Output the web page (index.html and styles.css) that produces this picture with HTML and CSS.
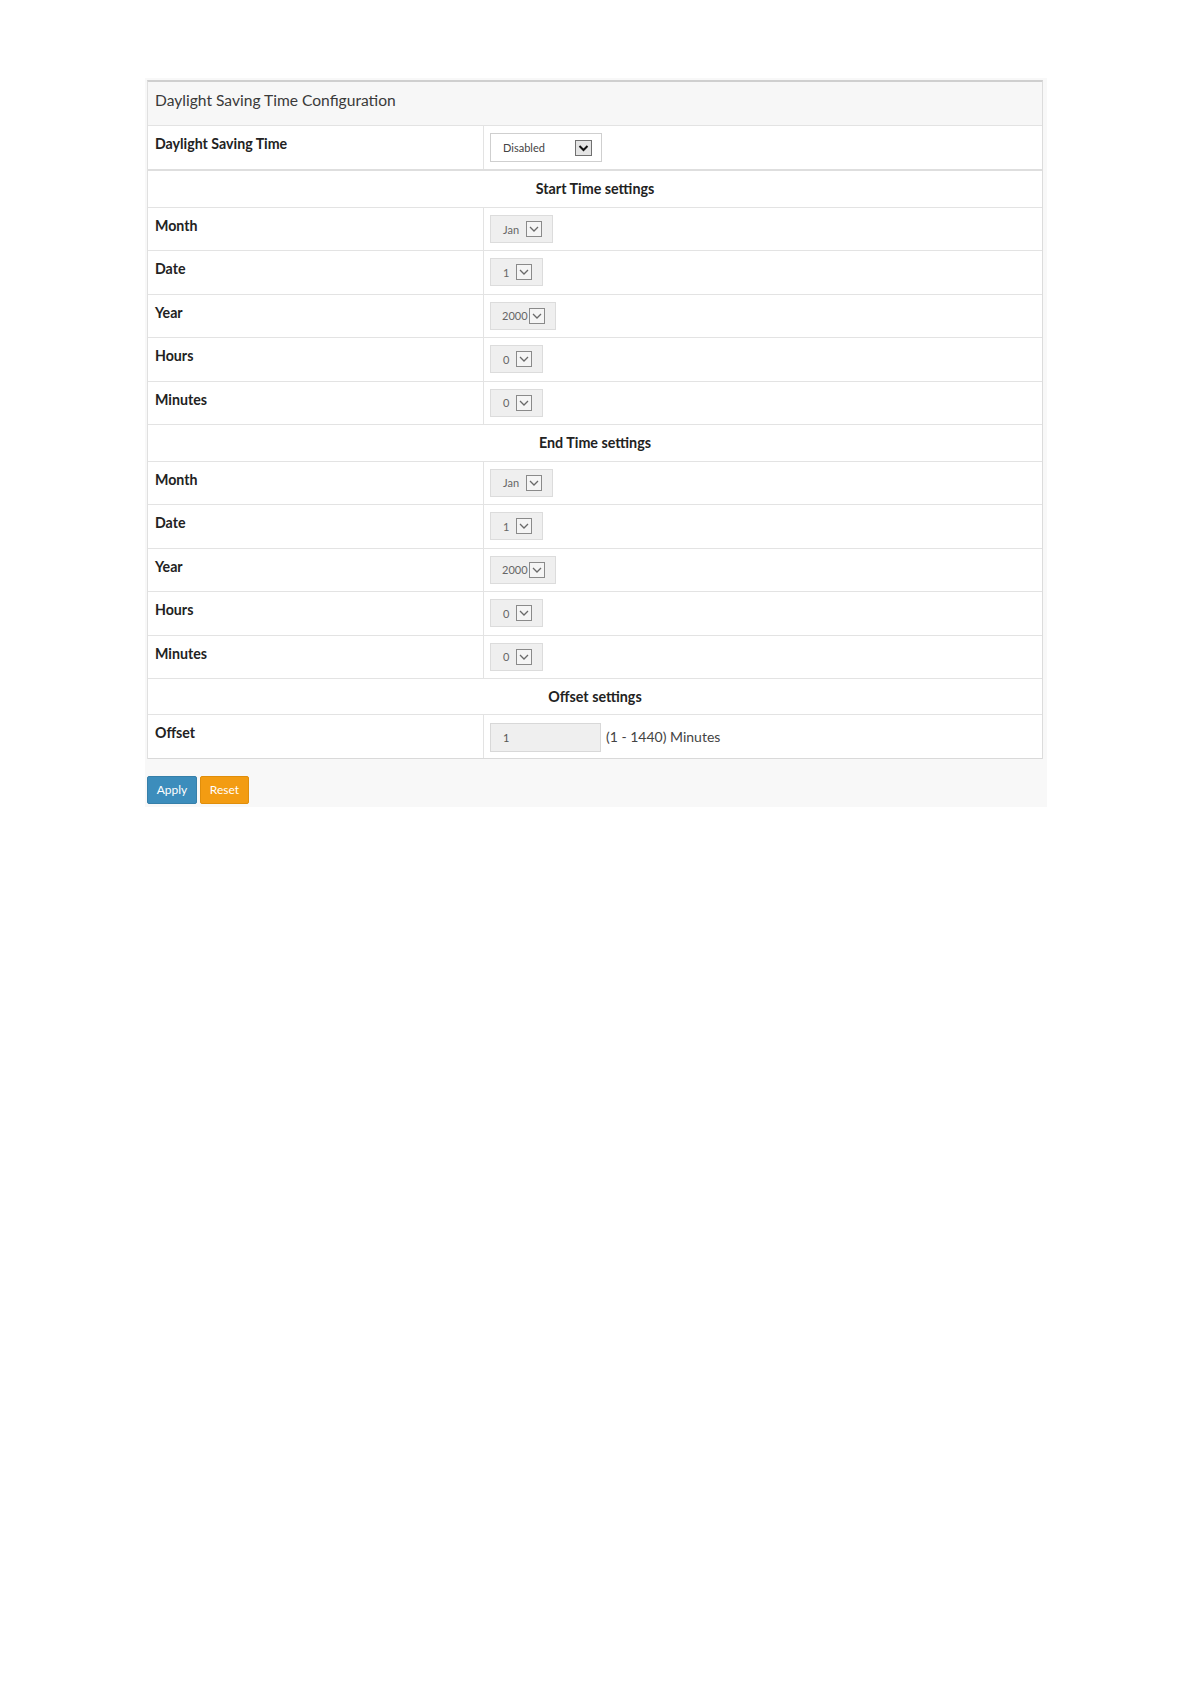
FILE: index.html
```html
<!DOCTYPE html>
<html>
<head>
<meta charset="utf-8">
<link rel="stylesheet" href="styles.css">
</head>
<body>
<div class="panel">
  <div class="box">
    <div class="box-title">Daylight Saving Time Configuration</div>
    <div class="row row-dst">
      <div class="cell label">Daylight Saving Time</div>
      <div class="cell value">
        <div class="sel sel-active w-dst"><span>Disabled</span><svg class="arr" viewBox="0 0 17 16"><rect x="0.5" y="0.5" width="16" height="15" /><path d="M4.5 6 L8.5 10 L12.5 6" /></svg></div>
      </div>
    </div>
    <div class="row section">Start Time settings</div>
    <div class="row data">
      <div class="cell label">Month</div>
      <div class="cell value"><div class="sel w-month"><span>Jan</span><svg class="arr" viewBox="0 0 16 16"><rect x="0.5" y="0.5" width="15" height="15" /><path d="M4 6 L8 10 L12 6" /></svg></div></div>
    </div>
    <div class="row data">
      <div class="cell label">Date</div>
      <div class="cell value"><div class="sel w-small"><span>1</span><svg class="arr" viewBox="0 0 16 16"><rect x="0.5" y="0.5" width="15" height="15" /><path d="M4 6 L8 10 L12 6" /></svg></div></div>
    </div>
    <div class="row data">
      <div class="cell label">Year</div>
      <div class="cell value"><div class="sel w-year"><span>2000</span><svg class="arr" viewBox="0 0 16 16"><rect x="0.5" y="0.5" width="15" height="15" /><path d="M4 6 L8 10 L12 6" /></svg></div></div>
    </div>
    <div class="row data">
      <div class="cell label">Hours</div>
      <div class="cell value"><div class="sel w-small"><span>0</span><svg class="arr" viewBox="0 0 16 16"><rect x="0.5" y="0.5" width="15" height="15" /><path d="M4 6 L8 10 L12 6" /></svg></div></div>
    </div>
    <div class="row data">
      <div class="cell label">Minutes</div>
      <div class="cell value"><div class="sel w-small"><span>0</span><svg class="arr" viewBox="0 0 16 16"><rect x="0.5" y="0.5" width="15" height="15" /><path d="M4 6 L8 10 L12 6" /></svg></div></div>
    </div>
    <div class="row section section-b">End Time settings</div>
    <div class="row data">
      <div class="cell label">Month</div>
      <div class="cell value"><div class="sel w-month"><span>Jan</span><svg class="arr" viewBox="0 0 16 16"><rect x="0.5" y="0.5" width="15" height="15" /><path d="M4 6 L8 10 L12 6" /></svg></div></div>
    </div>
    <div class="row data">
      <div class="cell label">Date</div>
      <div class="cell value"><div class="sel w-small"><span>1</span><svg class="arr" viewBox="0 0 16 16"><rect x="0.5" y="0.5" width="15" height="15" /><path d="M4 6 L8 10 L12 6" /></svg></div></div>
    </div>
    <div class="row data">
      <div class="cell label">Year</div>
      <div class="cell value"><div class="sel w-year"><span>2000</span><svg class="arr" viewBox="0 0 16 16"><rect x="0.5" y="0.5" width="15" height="15" /><path d="M4 6 L8 10 L12 6" /></svg></div></div>
    </div>
    <div class="row data">
      <div class="cell label">Hours</div>
      <div class="cell value"><div class="sel w-small"><span>0</span><svg class="arr" viewBox="0 0 16 16"><rect x="0.5" y="0.5" width="15" height="15" /><path d="M4 6 L8 10 L12 6" /></svg></div></div>
    </div>
    <div class="row data">
      <div class="cell label">Minutes</div>
      <div class="cell value"><div class="sel w-small"><span>0</span><svg class="arr" viewBox="0 0 16 16"><rect x="0.5" y="0.5" width="15" height="15" /><path d="M4 6 L8 10 L12 6" /></svg></div></div>
    </div>
    <div class="row section section-c">Offset settings</div>
    <div class="row data row-last">
      <div class="cell label">Offset</div>
      <div class="cell value"><div class="inp">1</div><span class="unit">(1 - 1440) Minutes</span></div>
    </div>
  </div>
  <div class="buttons">
    <button class="btn btn-apply">Apply</button>
    <button class="btn btn-reset">Reset</button>
  </div>
</div>
</body>
</html>
```

FILE: styles.css
```css
html, body {
  margin: 0;
  padding: 0;
  background: #ffffff;
}

body {
  font-family: "Lato", "Open Sans", sans-serif;
  color: #333333;
}

.panel {
  margin: 78px 0 0 145px;
  width: 902px;
  background: #f8f8f8;
  padding: 2px 0 3px 2px;
  box-sizing: border-box;
}

.box {
  width: 896px;
  border-top: 2px solid #cfcfcf;
  border-left: 1px solid #e0e0e0;
  border-right: 1px solid #dcdcdc;
  box-sizing: border-box;
  background: #ffffff;
}

.box-title {
  height: 44px;
  box-sizing: border-box;
  padding: 8px 0 0 7px;
  font-size: 15.6px;
  line-height: 20px;
  color: #3a3a3a;
  background: #f7f7f7;
  border-bottom: 1px solid #e3e3e3;
}

.row {
  display: grid;
  grid-template-columns: 336px 1fr;
  box-sizing: border-box;
  border-bottom: 1px solid #e3e3e3;
}

.row-dst {
  height: 45px;
  border-bottom: 2px solid #dedede;
}

.data {
  height: 43.4px;
}

.row-last {
  height: 44px;
  border-bottom: 1px solid #d9d9d9;
}

.section {
  display: block;
  height: 37px;
  padding-top: 9px;
  text-align: center;
  font-weight: bold;
  font-size: 14.3px;
  line-height: 18px;
  color: #222;
}

.section-b {
  height: 37px;
  padding-top: 9px;
}

.section-c {
  height: 36px;
  padding-top: 9px;
}

.cell {
  box-sizing: border-box;
}

.label {
  padding: 9px 0 0 7px;
  font-weight: bold;
  font-size: 14.2px;
  line-height: 18px;
  color: #222;
  border-right: 1px solid #e3e3e3;
}

.value {
  padding: 7px 0 0 6px;
  display: flex;
  align-items: center;
  align-self: start;
}

.sel {
  height: 28px;
  box-sizing: border-box;
  display: flex;
  align-items: center;
  justify-content: space-between;
  padding: 0 10px 0 12px;
  font-size: 11px;
  color: #666;
  background: #efefef;
  border: 1px solid #dcdcdc;
}

.sel-active {
  height: 29px;
  background: #ffffff;
  border: 1px solid #cfcfcf;
  color: #444;
  padding-right: 9px;
}

.w-dst { width: 112px; }
.w-month { width: 63px; }
.w-small { width: 53px; }
.w-year { width: 66px; padding-right: 10px; padding-left: 11px; }

.arr {
  width: 16px;
  height: 16px;
  flex: none;
}

.arr rect {
  fill: #f5f5f5;
  stroke: #8a8a8a;
  stroke-width: 1;
}

.arr path {
  fill: none;
  stroke: #6a6a6a;
  stroke-width: 1.3;
}

.sel-active .arr {
  width: 17px;
}

.sel-active .arr rect {
  fill: #e4e4e4;
  stroke: #707070;
}

.sel-active .arr path {
  stroke: #111;
  stroke-width: 2;
}

.inp {
  width: 111px;
  height: 29px;
  box-sizing: border-box;
  background: #efefef;
  border: 1px solid #d8d8d8;
  padding: 0 0 0 12px;
  font-size: 11px;
  line-height: 27px;
  color: #555;
  margin-top: 1px;
}

.unit {
  margin-left: 5px;
  font-size: 14px;
  color: #444;
}

.buttons {
  display: flex;
  gap: 3px;
  padding: 17px 0 0 0;
}

.btn {
  height: 28px;
  border: none;
  border-radius: 2px;
  color: #ffffff;
  font-family: "Lato", "Open Sans", sans-serif;
  font-size: 12px;
  padding: 0;
}

.btn-apply {
  width: 50px;
  background: #3c8dbc;
  border: 1px solid #367fa9;
}

.btn-reset {
  width: 49px;
  background: #f39c12;
  border: 1px solid #e08e0b;
}
```
